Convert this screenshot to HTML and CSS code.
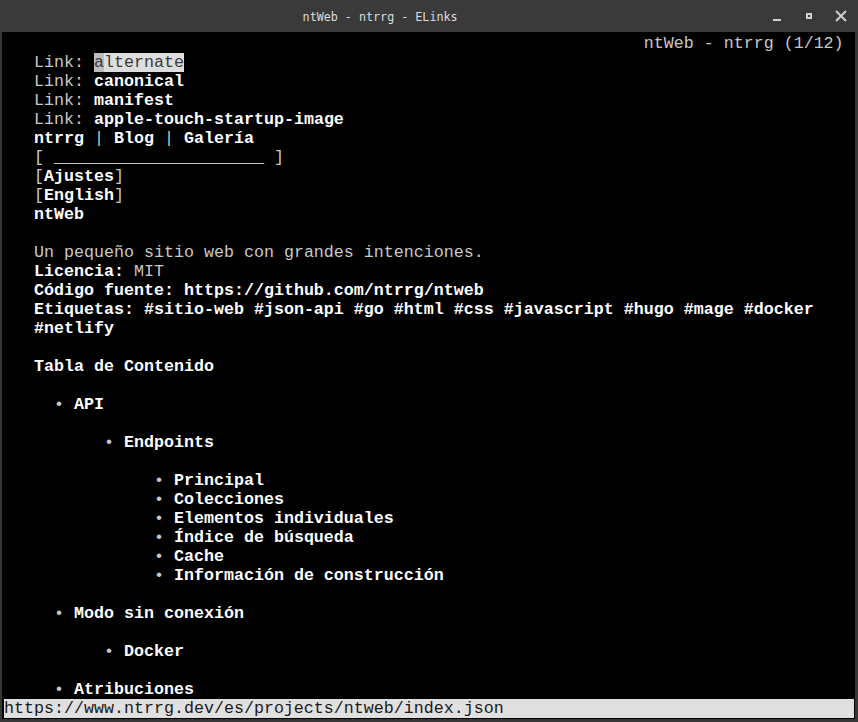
FILE: index.html
```html
<!DOCTYPE html>
<html lang="es">
<head>
<meta charset="utf-8">
<title>ntWeb - ntrrg - ELinks</title>
<link rel="stylesheet" href="styles.css">
</head>
<body>
<div class="window">
  <div class="titlebar">
    <div class="title">ntWeb - ntrrg - ELinks</div>
    <div class="controls">
      <svg class="ctl" width="14" height="14" viewBox="0 0 14 14"><rect x="3" y="10" width="8" height="2" fill="#d0d0d0"/></svg>
      <svg class="ctl" width="14" height="14" viewBox="0 0 14 14"><rect x="4" y="4" width="6" height="6" fill="#d0d0d0"/><rect x="6" y="6" width="2" height="2" fill="#3a3a3a"/></svg>
      <svg class="ctl" width="14" height="14" viewBox="0 0 14 14"><path d="M2 2 L12 12 M12 2 L2 12" stroke="#d0d0d0" stroke-width="2" fill="none"/></svg>
    </div>
  </div>
  <div class="term">
<pre class="screen"><span class="r">                                                                ntWeb - ntrrg (1/12)</span>
   <span class="r">Link: </span><span class="sel"><span class="cur">a</span>lternate</span>
   <span class="r">Link: </span><b>canonical</b>
   <span class="r">Link: </span><b>manifest</b>
   <span class="r">Link: </span><b>apple-touch-startup-image</b>
   <b>ntrrg</b><span class="r"> | </span><b>Blog</b><span class="r"> | </span><b>Galería</b>
   <span class="r">[ _____________________ ]</span>
   <span class="r">[</span><b>Ajustes</b><span class="r">]</span>
   <span class="r">[</span><b>English</b><span class="r">]</span>
   <b>ntWeb</b>

   <span class="r">Un pequeño sitio web con grandes intenciones.</span>
   <b>Licencia:</b><span class="r"> MIT</span>
   <b>Código fuente: https://github.com/ntrrg/ntweb</b>
   <b>Etiquetas: #sitio-web #json-api #go #html #css #javascript #hugo #mage #docker</b>
   <b>#netlify</b>

   <b>Tabla de Contenido</b>

     <span class="r">•</span> <b>API</b>

          <span class="r">•</span> <b>Endpoints</b>

               <span class="r">•</span> <b>Principal</b>
               <span class="r">•</span> <b>Colecciones</b>
               <span class="r">•</span> <b>Elementos individuales</b>
               <span class="r">•</span> <b>Índice de búsqueda</b>
               <span class="r">•</span> <b>Cache</b>
               <span class="r">•</span> <b>Información de construcción</b>

     <span class="r">•</span> <b>Modo sin conexión</b>

          <span class="r">•</span> <b>Docker</b>

     <span class="r">•</span> <b>Atribuciones</b></pre>
    <div class="status">https://www.ntrrg.dev/es/projects/ntweb/index.json</div>
  </div>
</div>
</body>
</html>
```

FILE: styles.css
```css
html, body {
  margin: 0;
  padding: 0;
  background: #363636;
}

.window {
  width: 858px;
  height: 722px;
  background: #363636;
  display: flex;
  flex-direction: column;
  overflow: hidden;
}

.titlebar {
  height: 32px;
  flex: 0 0 32px;
  box-sizing: border-box;
  padding-right: 98px;
  background: #3a3a3a;
  position: relative;
  display: flex;
  align-items: center;
  justify-content: center;
}

.title {
  font-family: "DejaVu Sans Mono", monospace;
  font-size: 13px;
  color: #dcdcdc;
  transform: scaleX(0.9);
  white-space: pre;
}

.controls {
  position: absolute;
  right: 10px;
  top: 9px;
  display: flex;
  gap: 18px;
}

.ctl {
  display: block;
}

.term {
  margin: 0 3px 3px 2px;
  background: #000;
  padding: 2px 1px 1px 2px;
  height: 684px;
  display: flex;
  flex-direction: column;
}

.screen {
  margin: 0;
  font-family: "Liberation Mono", monospace;
  font-size: 16.67px;
  line-height: 19px;
  height: 665px;
  color: #ffffff;
  white-space: pre;
}

.screen b {
  font-weight: bold;
  color: #ffffff;
}

.r {
  color: #c8c8c8;
  font-weight: normal;
}

.sel {
  background: #dedede;
  color: #3a3a3a;
}

.cur {
  background: #bdbdbd;
}

.status {
  height: 19px;
  font-family: "Liberation Mono", monospace;
  font-size: 16.67px;
  line-height: 19px;
  background: #e0e0e0;
  color: #1a1a1a;
  white-space: pre;
}
```
